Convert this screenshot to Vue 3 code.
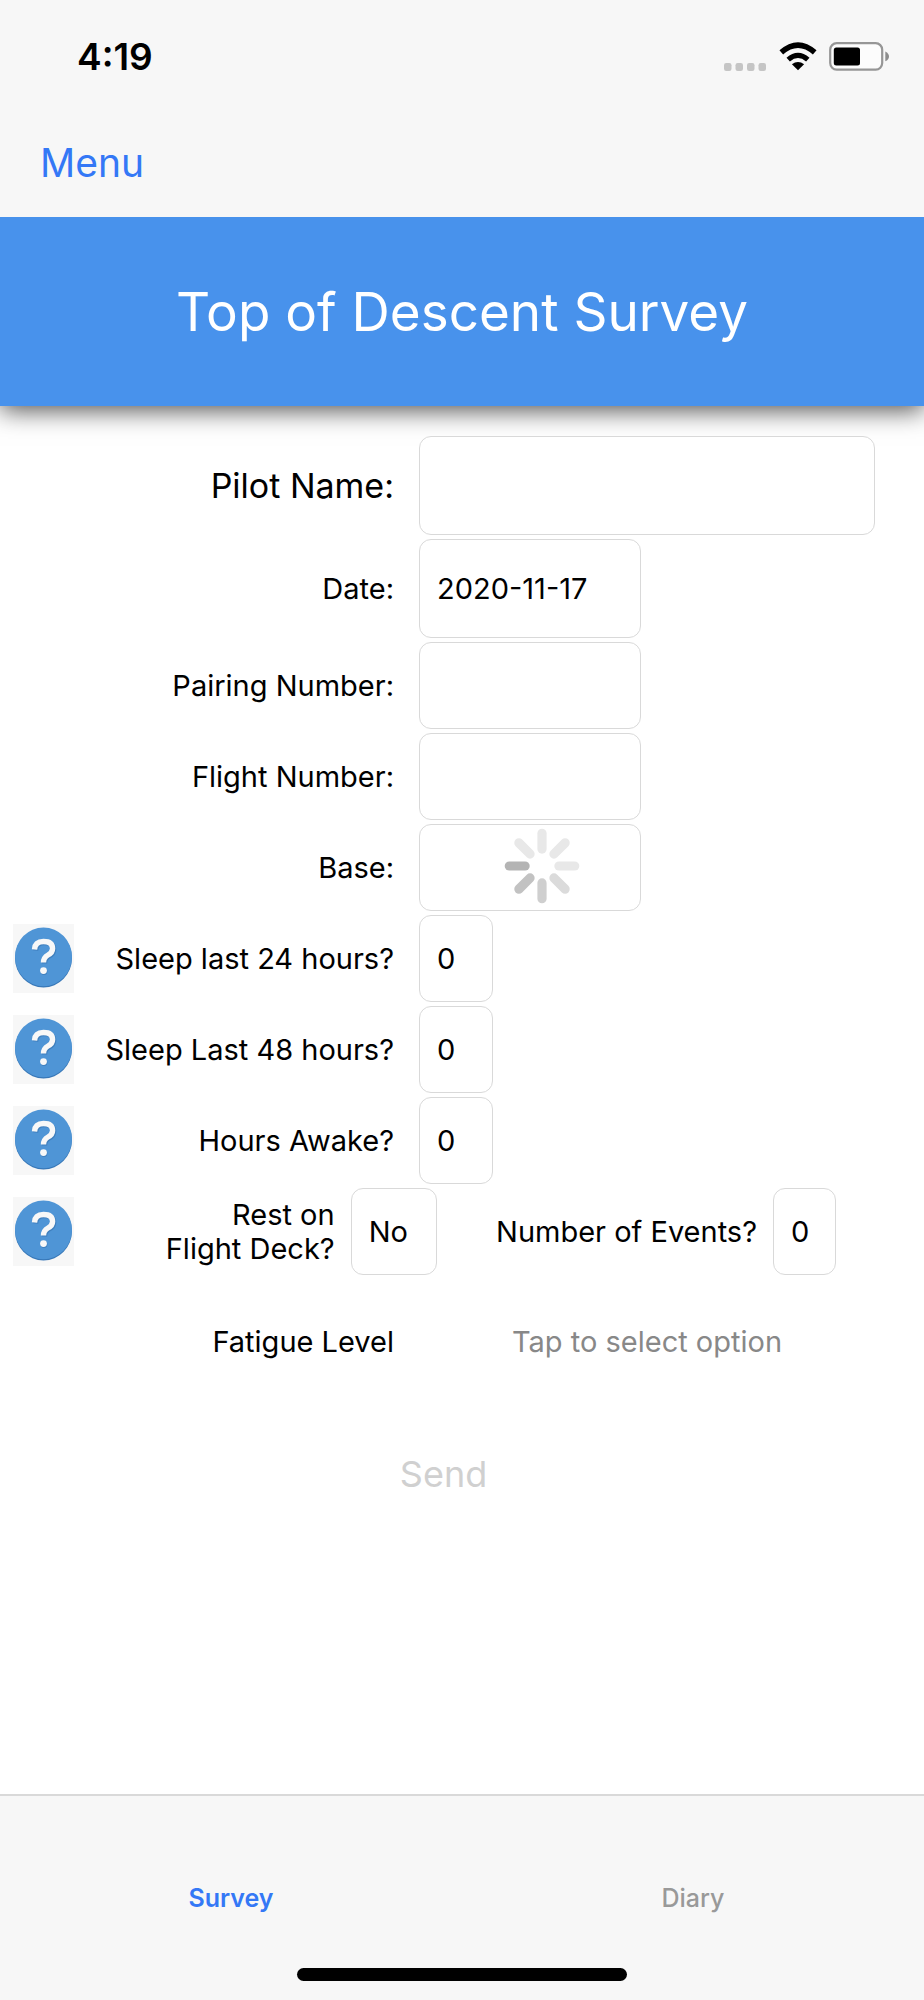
<script setup>
import { reactive } from 'vue'

const form = reactive({
  pilot: '',
  date: '2020-11-17',
  pairing: '',
  flight: '',
  base: '',
  sleep24: '0',
  sleep48: '0',
  awake: '0',
  rest: 'No',
  events: '0',
  fatigue: '',
})

const textRows = [
  { key: 'pilot', label: 'Pilot Name:', size: 'wide' },
  { key: 'date', label: 'Date:', size: 'tall' },
  { key: 'pairing', label: 'Pairing Number:', size: '' },
  { key: 'flight', label: 'Flight Number:', size: '' },
]

const hourRows = [
  { key: 'sleep24', label: 'Sleep last 24 hours?' },
  { key: 'sleep48', label: 'Sleep Last 48 hours?' },
  { key: 'awake', label: 'Hours Awake?' },
]

const hours = Array.from({ length: 25 }, (_, i) => String(i))
const levels = ['1', '2', '3', '4', '5', '6', '7']

const spokes = [
  { angle: 0, color: '#e8e8e8' },
  { angle: 45, color: '#e8e8e8' },
  { angle: 90, color: '#e8e8e8' },
  { angle: 135, color: '#dbdbdb' },
  { angle: 180, color: '#cfcfcf' },
  { angle: 225, color: '#c2c2c2' },
  { angle: 270, color: '#b4b4b4' },
  { angle: 315, color: '#e8e8e8' },
]
</script>

<template>
  <div class="screen">
    <header class="top">
      <div class="status">
        <span class="time">4:19</span>
        <div class="indicators">
          <svg class="dots" width="43" height="8" viewBox="0 0 43 8" aria-hidden="true">
            <rect v-for="n in 4" :key="n" :x="(n - 1) * 11.5" y="0" width="7.5" height="8" rx="2.2" fill="#c5c5c5" />
          </svg>
          <svg class="wifi" width="38" height="29" viewBox="0 0 38 29" aria-hidden="true">
            <path d="M19 28.3 L12.9 22.2 Q19 17.6 25.1 22.2 Z" fill="#000" />
            <path d="M9.2 17.6 Q19 9.2 28.8 17.6" fill="none" stroke="#000" stroke-width="5.2" />
            <path d="M2.3 10.4 Q19 -4.2 35.7 10.4" fill="none" stroke="#000" stroke-width="5.6" />
          </svg>
          <svg class="battery" width="61" height="29" viewBox="0 0 61 29" aria-hidden="true">
            <rect x="1.2" y="1.2" width="52" height="26.4" rx="6.5" fill="#fcfcfc" stroke="#969696" stroke-width="2.2" />
            <rect x="4.8" y="5.4" width="26.2" height="18" rx="2.5" fill="#000" />
            <path d="M56.3 9.5 Q60 11.4 60 14.4 Q60 17.4 56.3 19.3 Z" fill="#8c8c8c" />
          </svg>
        </div>
      </div>
      <nav class="nav">
        <button type="button" class="menu">Menu</button>
      </nav>
    </header>

    <h1 class="banner">Top of Descent Survey</h1>

    <main class="content">
      <form class="form" @submit.prevent>
        <div v-for="row in textRows" :key="row.key" class="row">
          <label :for="row.key" class="label" :class="{ large: row.size === 'wide' }">{{ row.label }}</label>
          <input :id="row.key" v-model="form[row.key]" type="text" class="field medium" :class="row.size" />
        </div>

        <div class="row">
          <label for="base" class="label">Base:</label>
          <div class="loading">
            <select id="base" v-model="form.base" class="field medium">
              <option value=""></option>
            </select>
            <svg class="spinner" width="76" height="76" viewBox="-38 -38 76 76" role="img" aria-label="Loading">
              <rect
                v-for="s in spokes"
                :key="s.angle"
                x="-4.6"
                y="-37.3"
                width="9.2"
                height="25"
                rx="4.6"
                :fill="s.color"
                :transform="`rotate(${s.angle})`"
              />
            </svg>
          </div>
        </div>

        <div v-for="row in hourRows" :key="row.key" class="row">
          <button type="button" class="help" :aria-label="`Help: ${row.label}`">
            <svg width="61" height="69" viewBox="0 0 61 69" aria-hidden="true">
              <ellipse cx="30.5" cy="34" rx="28.5" ry="29.5" fill="#3878b8" />
              <ellipse cx="30.5" cy="32.8" rx="28.5" ry="29.4" fill="#4f95d6" />
              <path d="M21.5 25.5 Q22 17.5 30.5 17.5 Q39.5 17.5 39.6 24.5 Q39.6 28.5 35 31 Q30.5 33.5 30.5 38.5" transform="translate(1 1)" fill="none" stroke="#3f7fbe" stroke-width="5.4" />
              <path d="M21.5 25.5 Q22 17.5 30.5 17.5 Q39.5 17.5 39.6 24.5 Q39.6 28.5 35 31 Q30.5 33.5 30.5 38.5" fill="none" stroke="#f8f8f8" stroke-width="5.4" />
              <circle cx="31" cy="47.6" r="3.4" fill="#3f7fbe" />
              <circle cx="30.5" cy="46.6" r="3.4" fill="#f8f8f8" />
            </svg>
          </button>
          <label :for="row.key" class="label">{{ row.label }}</label>
          <select :id="row.key" v-model="form[row.key]" class="field small">
            <option v-for="h in hours" :key="h" :value="h">{{ h }}</option>
          </select>
        </div>

        <div class="row">
          <button type="button" class="help" aria-label="Help: Rest on Flight Deck?">
            <svg width="61" height="69" viewBox="0 0 61 69" aria-hidden="true">
              <ellipse cx="30.5" cy="34" rx="28.5" ry="29.5" fill="#3878b8" />
              <ellipse cx="30.5" cy="32.8" rx="28.5" ry="29.4" fill="#4f95d6" />
              <path d="M21.5 25.5 Q22 17.5 30.5 17.5 Q39.5 17.5 39.6 24.5 Q39.6 28.5 35 31 Q30.5 33.5 30.5 38.5" transform="translate(1 1)" fill="none" stroke="#3f7fbe" stroke-width="5.4" />
              <path d="M21.5 25.5 Q22 17.5 30.5 17.5 Q39.5 17.5 39.6 24.5 Q39.6 28.5 35 31 Q30.5 33.5 30.5 38.5" fill="none" stroke="#f8f8f8" stroke-width="5.4" />
              <circle cx="31" cy="47.6" r="3.4" fill="#3f7fbe" />
              <circle cx="30.5" cy="46.6" r="3.4" fill="#f8f8f8" />
            </svg>
          </button>
          <div class="pair">
            <label for="rest" class="label near">Rest on<br />Flight Deck?</label>
            <select id="rest" v-model="form.rest" class="field choice">
              <option>No</option>
              <option>Yes</option>
            </select>
            <label for="events" class="label near">Number of Events?</label>
            <select id="events" v-model="form.events" class="field count">
              <option v-for="h in hours" :key="h" :value="h">{{ h }}</option>
            </select>
          </div>
        </div>

        <div class="row fatigue">
          <label for="fatigue" class="label">Fatigue Level</label>
          <select id="fatigue" v-model="form.fatigue" class="picker">
            <option value="">Tap to select option</option>
            <option v-for="l in levels" :key="l" :value="l">{{ l }}</option>
          </select>
        </div>

        <button type="submit" class="send" disabled>Send</button>
      </form>
    </main>

    <footer class="bottom">
      <nav class="tabs">
        <a href="#survey" class="tab active" aria-current="page">Survey</a>
        <a href="#diary" class="tab">Diary</a>
      </nav>
      <div class="home"></div>
    </footer>
  </div>
</template>

<style>
body {
  background: #fff;
}
</style>

<style scoped>
.screen,
.screen * {
  box-sizing: border-box;
}

.screen {
  display: flex;
  flex-direction: column;
  min-height: 100vh;
  color: #000;
  background: #fff;
  font-family: Inter, "Liberation Sans", sans-serif;
  font-size: 29px;
  line-height: 34px;
}

button,
input,
select {
  margin: 0;
  padding: 0;
  border: 0;
  background: none;
  color: inherit;
  font: inherit;
  appearance: none;
}

.top {
  position: relative;
  z-index: 1;
  background: #f7f7f7;
}

.status {
  display: flex;
  align-items: center;
  justify-content: space-between;
  height: 113px;
  padding: 0 34px 0 77px;
}

.time {
  font-size: 37px;
  font-weight: 600;
}

.indicators {
  display: flex;
  align-items: flex-end;
  gap: 12px;
}

.nav {
  display: flex;
  align-items: center;
  height: 104px;
  padding: 0 40px 4px;
}

.menu {
  color: #3478f6;
  font-size: 39px;
  line-height: 48px;
}

.banner {
  margin: 0;
  padding: 61px 20px 59px;
  background: #4892ec;
  box-shadow: 0 4px 24px rgba(0, 0, 0, 0.7);
  color: #fff;
  font-size: 53px;
  font-weight: 400;
  line-height: 69px;
  text-align: center;
}

.content {
  flex: 1;
  padding: 30px 49px 40px 12px;
}

.form {
  display: flex;
  flex-direction: column;
  gap: 4px;
}

.row {
  display: grid;
  grid-template-columns: 62px minmax(0, 345fr) minmax(0, 456fr);
  align-items: center;
}

.label {
  grid-column: 2;
  padding-right: 25px;
  text-align: right;
}

.label.large {
  font-size: 34px;
}

.field {
  display: block;
  height: 87px;
  padding: 0 17px;
  border: 1px solid #d9d9d9;
  border-radius: 12px;
  background: #fff;
}

.medium {
  width: 222px;
}

.tall {
  height: 99px;
}

.wide {
  width: 100%;
  height: 99px;
}

.small {
  width: 74px;
}

.choice {
  width: 86px;
}

.count {
  width: 63px;
}

.loading {
  position: relative;
}

.spinner {
  position: absolute;
  top: 4px;
  left: 85px;
}

.help {
  display: block;
  width: 61px;
  height: 69px;
  margin-left: 1px;
  background: #f7f7f7;
}

.help svg {
  display: block;
}

.pair {
  grid-column: 2 / 4;
  display: flex;
  align-items: center;
  padding-right: 39px;
}

.near {
  flex: 338 1 0;
  padding-right: 16px;
}

.near:first-child {
  flex-grow: 275;
}

.fatigue {
  margin-top: 19px;
  min-height: 87px;
}

.picker {
  width: 100%;
  color: #888;
  text-align: center;
  text-align-last: center;
}

.send {
  align-self: center;
  margin-top: 61px;
  color: #d0d0d0;
  font-size: 36px;
  line-height: 48px;
}

.bottom {
  display: flex;
  flex-direction: column;
  align-items: center;
  justify-content: space-between;
  min-height: 206px;
  padding-bottom: 19px;
  border-top: 2px solid #d9d9d9;
  background: #f7f7f7;
}

.tabs {
  display: flex;
  width: 100%;
  padding-top: 85px;
}

.tab {
  flex: 1;
  color: #999;
  font-size: 25px;
  font-weight: 500;
  text-align: center;
  text-decoration: none;
}

.tab.active {
  color: #3478f6;
  font-weight: 600;
}

.home {
  width: 330px;
  height: 13px;
  border-radius: 7px;
  background: #000;
}
</style>
